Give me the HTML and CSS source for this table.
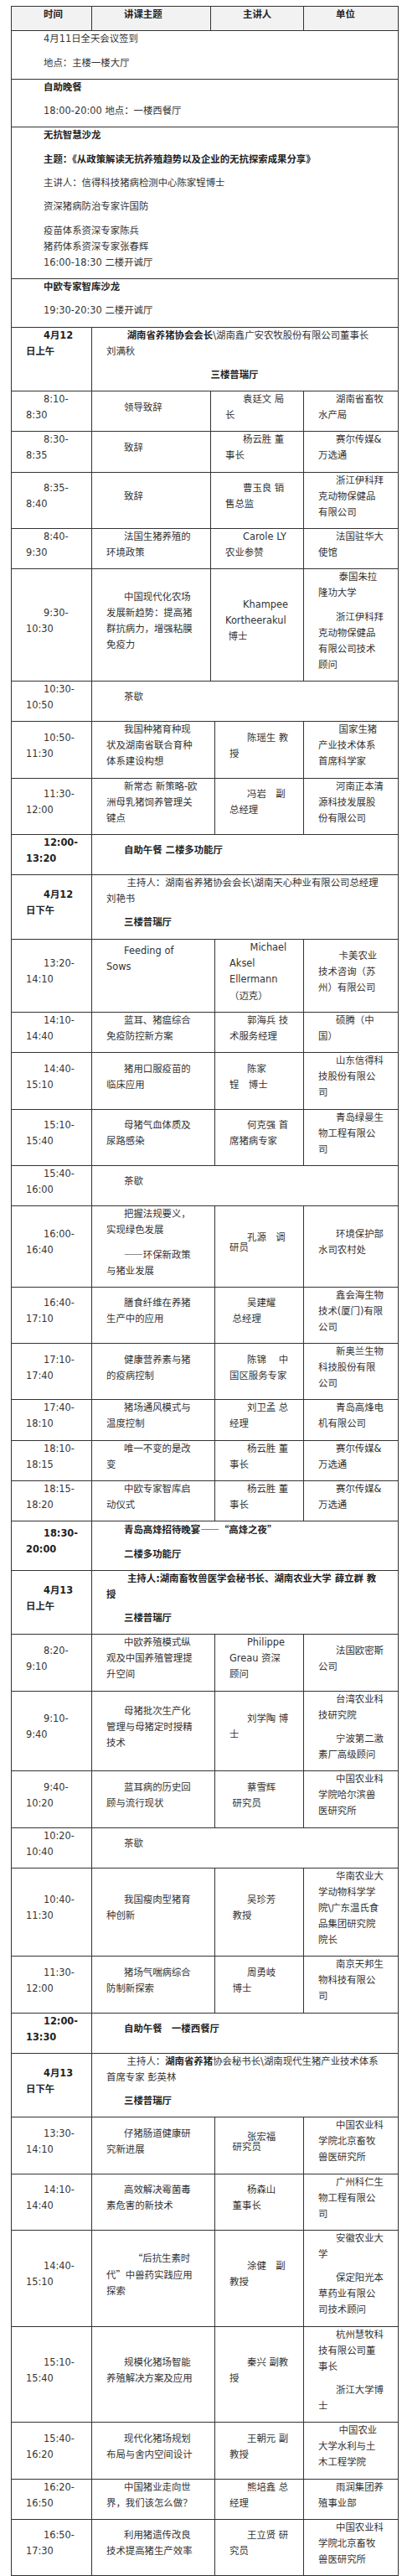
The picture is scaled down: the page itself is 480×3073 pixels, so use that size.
FILE: index.html
```html
<!DOCTYPE html>
<html lang="zh-CN">
<head>
<meta charset="utf-8">
<title>会议日程</title>
<link rel="stylesheet" href="styles.css">
</head>
<body>
<table class="agenda">
<colgroup>
<col class="col-time"><col class="col-topic"><col class="col-join"><col class="col-speaker"><col class="col-org">
</colgroup>
<thead>
<tr class="head">
<th><p>时间</p></th>
<th><p>讲课主题</p></th>
<th colspan="2"><p>主讲人</p></th>
<th><p>单位</p></th>
</tr>
</thead>
<tbody>
<tr><td colspan="5"><p>4月11日全天会议签到</p><p>地点：主楼一楼大厅</p></td></tr>
<tr><td colspan="5"><p class="b">自助晚餐</p><p>18:00-20:00 地点：一楼西餐厅</p></td></tr>
<tr><td colspan="5"><p class="b">无抗智慧沙龙</p><p class="b">主题：《从政策解读无抗养殖趋势以及企业的无抗探索成果分享》</p><p>主讲人：信得科技猪病检测中心陈家锃博士</p><p>资深猪病防治专家许国防</p><p class="keep">疫苗体系资深专家陈兵</p><p class="keep">猪药体系资深专家张春辉</p><p>16:00-18:30 二楼开诚厅</p></td></tr>
<tr><td colspan="5"><p class="b">中欧专家智库沙龙</p><p>19:30-20:30 二楼开诚厅</p></td></tr>

<tr><td class="top"><p class="b">4月12<br>日上午</p></td><td colspan="4"><p>&nbsp;<b>湖南省养猪协会会长</b>\湖南鑫广安农牧股份有限公司董事长<br>刘满秋</p><p class="b venue-mid">三楼普瑞厅</p></td></tr>
<tr><td><p>8:10-<br>8:30</p></td><td><p>领导致辞</p></td><td colspan="2"><p>袁廷文 局<br>长</p></td><td><p>湖南省畜牧<br>水产局</p></td></tr>
<tr><td><p>8:30-<br>8:35</p></td><td><p>致辞</p></td><td colspan="2"><p>杨云胜 董<br>事长</p></td><td><p>赛尔传媒&amp;<br>万选通</p></td></tr>
<tr><td><p>8:35-<br>8:40</p></td><td><p>致辞</p></td><td colspan="2"><p>曹玉良 销<br>售总监</p></td><td><p>浙江伊科拜<br>克动物保健品<br>有限公司</p></td></tr>
<tr><td><p>8:40-<br>9:30</p></td><td><p>法国生猪养殖的<br>环境政策</p></td><td colspan="2"><p>Carole LY<br>农业参赞</p></td><td><p>法国驻华大<br>使馆</p></td></tr>
<tr><td><p>9:30-<br>10:30</p></td><td><p>中国现代化农场<br>发展新趋势：提高猪<br>群抗病力，增强粘膜<br>免疫力</p></td><td colspan="2"><p>Khampee<br>Kortheerakul<br>&nbsp;博士</p></td><td><p>&nbsp;泰国朱拉<br>隆功大学</p><p>浙江伊科拜<br>克动物保健品<br>有限公司技术<br>顾问</p></td></tr>
<tr><td><p>10:30-<br>10:50</p></td><td colspan="4"><p>茶歇</p></td></tr>
<tr><td><p>10:50-<br>11:30</p></td><td colspan="2"><p>我国种猪育种现<br>状及湖南省联合育种<br>体系建设构想</p></td><td><p>陈瑶生 教<br>授</p></td><td><p>&nbsp;国家生猪<br>产业技术体系<br>首席科学家</p></td></tr>
<tr><td><p>11:30-<br>12:00</p></td><td colspan="2"><p>新常态 新策略-欧<br>洲母乳猪饲养管理关<br>键点</p></td><td><p>冯岩　副<br>总经理</p></td><td><p>河南正本清<br>源科技发展股<br>份有限公司</p></td></tr>
<tr><td><p class="b">12:00-<br>13:20</p></td><td colspan="4"><p class="b">自助午餐 二楼多功能厅</p></td></tr>

<tr><td><p class="b">4月12<br>日下午</p></td><td colspan="4"><p>&nbsp;主持人：湖南省养猪协会会长\湖南天心种业有限公司总经理<br>刘艳书</p><p class="b">三楼普瑞厅</p></td></tr>
<tr><td><p>13:20-<br>14:10</p></td><td colspan="2" class="feed"><p>Feeding of<br>Sows</p></td><td><p>&nbsp;Michael<br>Aksel<br>Ellermann<br><span class="cjk">（迈克）</span></p></td><td><p>&nbsp;卡美农业<br>技术咨询（苏<br>州）有限公司</p></td></tr>
<tr><td><p>14:10-<br>14:40</p></td><td colspan="2"><p>蓝耳、猪瘟综合<br>免疫防控新方案</p></td><td><p>郭海兵 技<br>术服务经理</p></td><td><p>硕腾（中<br>国）</p></td></tr>
<tr><td><p>14:40-<br>15:10</p></td><td colspan="2"><p>猪用口服疫苗的<br>临床应用</p></td><td><p>陈家<br>锃　博士</p></td><td><p>山东信得科<br>技股份有限公<br>司</p></td></tr>
<tr><td><p>15:10-<br>15:40</p></td><td colspan="2"><p>母猪气血体质及<br>尿路感染</p></td><td><p>何克强 首<br>席猪病专家</p></td><td><p>青岛绿曼生<br>物工程有限公<br>司</p></td></tr>
<tr><td><p>15:40-<br>16:00</p></td><td colspan="4"><p>茶歇</p></td></tr>
<tr><td><p>16:00-<br>16:40</p></td><td colspan="2"><p>把握法规要义，<br>实现绿色发展</p><p><span class="cjk">——</span>环保新政策<br>与猪业发展</p></td><td class="squeeze"><p>孔源　调<br>研员</p></td><td><p>环境保护部<br>水司农村处</p></td></tr>
<tr><td><p>16:40-<br>17:10</p></td><td colspan="2"><p>膳食纤维在养猪<br>生产中的应用</p></td><td><p>吴建耀<br>&nbsp;总经理</p></td><td><p>鑫会海生物<br>技术(厦门)有限<br>公司</p></td></tr>
<tr><td><p>17:10-<br>17:40</p></td><td colspan="2"><p>健康营养素与猪<br>的疫病控制</p></td><td><p>陈锦　 中<br>国区服务专家</p></td><td><p>新奥兰生物<br>科技股份有限<br>公司</p></td></tr>
<tr><td><p>17:40-<br>18:10</p></td><td colspan="2"><p>猪场通风模式与<br>温度控制</p></td><td><p>刘卫孟 总<br>经理</p></td><td><p>青岛高烽电<br>机有限公司</p></td></tr>
<tr><td><p>18:10-<br>18:15</p></td><td colspan="2"><p>唯一不变的是改<br>变</p></td><td><p>杨云胜 董<br>事长</p></td><td><p>赛尔传媒&amp;<br>万选通</p></td></tr>
<tr><td><p>18:15-<br>18:20</p></td><td colspan="2"><p>中欧专家智库启<br>动仪式</p></td><td><p>杨云胜 董<br>事长</p></td><td><p>赛尔传媒&amp;<br>万选通</p></td></tr>
<tr><td><p class="b">18:30-<br>20:00</p></td><td colspan="4"><p class="b">青岛高烽招待晚宴<span class="cjk">——“</span>高烽之夜<span class="cjk">”</span></p><p class="b">二楼多功能厅</p></td></tr>

<tr><td><p class="b">4月13<br>日上午</p></td><td colspan="4"><p class="b">&nbsp;主持人:湖南畜牧兽医学会秘书长、湖南农业大学 薛立群 教<br>授</p><p class="b">三楼普瑞厅</p></td></tr>
<tr><td><p>8:20-<br>9:10</p></td><td colspan="2"><p>中欧养殖模式纵<br>观及中国养殖管理提<br>升空间</p></td><td><p>Philippe<br>Greau 资深<br>顾问</p></td><td><p>法国欧密斯<br>公司</p></td></tr>
<tr><td><p>9:10-<br>9:40</p></td><td colspan="2"><p>母猪批次生产化<br>管理与母猪定时授精<br>技术</p></td><td><p>刘学陶 博<br>士</p></td><td><p>台湾农业科<br>技研究院</p><p>宁波第二激<br>素厂高级顾问</p></td></tr>
<tr><td><p>9:40-<br>10:20</p></td><td colspan="2"><p>蓝耳病的历史回<br>顾与流行现状</p></td><td><p>蔡雪辉<br>&nbsp;研究员</p></td><td><p>中国农业科<br>学院哈尔滨兽<br>医研究所</p></td></tr>
<tr><td><p>10:20-<br>10:40</p></td><td colspan="4"><p>茶歇</p></td></tr>
<tr><td><p>10:40-<br>11:30</p></td><td colspan="2"><p>我国瘦肉型猪育<br>种创新</p></td><td><p>吴珍芳<br>&nbsp;教授</p></td><td><p>华南农业大<br>学动物科学学<br>院\广东温氏食<br>品集团研究院<br>院长</p></td></tr>
<tr><td><p>11:30-<br>12:00</p></td><td colspan="2"><p>猪场气喘病综合<br>防制新探索</p></td><td><p>周勇岐<br>&nbsp;博士</p></td><td><p>南京天邦生<br>物科技有限公<br>司</p></td></tr>
<tr><td><p class="b">12:00-<br>13:30</p></td><td colspan="4"><p class="b">自助午餐　一楼西餐厅</p></td></tr>

<tr><td><p class="b">4月13<br>日下午</p></td><td colspan="4"><p>&nbsp;主持人：<b>湖南省养猪</b>协会秘书长\湖南现代生猪产业技术体系<br>首席专家 彭英林</p><p class="b">三楼普瑞厅</p></td></tr>
<tr><td><p>13:30-<br>14:10</p></td><td colspan="2"><p>仔猪肠道健康研<br>究新进展</p></td><td class="squeeze"><p>张宏福<br>&nbsp;研究员</p></td><td><p>中国农业科<br>学院北京畜牧<br>兽医研究所</p></td></tr>
<tr><td><p>14:10-<br>14:40</p></td><td colspan="2"><p>高效解决霉菌毒<br>素危害的新技术</p></td><td><p>杨森山<br>&nbsp;董事长</p></td><td><p>广州科仁生<br>物工程有限公<br>司</p></td></tr>
<tr><td><p>14:40-<br>15:10</p></td><td colspan="2"><p>&nbsp;&nbsp;&nbsp;<span class="cjk">“</span>后抗生素时<br>代<span class="cjk">”</span>中兽药实践应用<br>探索</p></td><td><p>涂健　副<br>教授</p></td><td><p>安徽农业大<br>学</p><p>保定阳光本<br>草药业有限公<br>司技术顾问</p></td></tr>
<tr><td><p>15:10-<br>15:40</p></td><td colspan="2"><p>规模化猪场智能<br>养殖解决方案及应用</p></td><td><p>秦兴 副教<br>授</p></td><td><p>杭州慧牧科<br>技有限公司董<br>事长</p><p>浙江大学博<br>士</p></td></tr>
<tr><td><p>15:40-<br>16:20</p></td><td colspan="2"><p>现代化猪场规划<br>布局与舍内空间设计</p></td><td><p>王朝元 副<br>教授</p></td><td><p>&nbsp;中国农业<br>大学水利与土<br>木工程学院</p></td></tr>
<tr><td><p>16:20-<br>16:50</p></td><td colspan="2"><p>中国猪业走向世<br>界，我们该怎么做？</p></td><td><p>熊培鑫 总<br>经理</p></td><td><p>雨润集团养<br>殖事业部</p></td></tr>
<tr><td><p>16:50-<br>17:30</p></td><td colspan="2"><p>利用猪遗传改良<br>技术提高猪生产效率</p></td><td><p>王立贤 研<br>究员</p></td><td><p>中国农业科<br>学院北京畜牧<br>兽医研究所</p></td></tr>
</tbody>
</table>
</body>
</html>
```

FILE: styles.css
```css
html, body {
  margin: 0;
  padding: 0;
  background: #ffffff;
}

body {
  font-family: "DejaVu Sans", "Noto Sans CJK SC", sans-serif;
  font-size: 11.4px;
  color: #333333;
}

.agenda {
  border-collapse: collapse;
  table-layout: fixed;
  width: 462px;
  margin: 7px 0 0 13px;
}

.col-time { width: 96px; }
.col-topic { width: 142px; }
.col-join { width: 5px; }
.col-speaker { width: 106px; }
.col-org { width: 113px; }

.agenda th,
.agenda td {
  border: 1px solid #333333;
  padding: 0 6px 0 17px;
  vertical-align: middle;
  text-align: left;
  font-weight: normal;
}

.agenda p {
  margin: 0 0 9.3px;
  text-indent: 21px;
  line-height: 19px;
  white-space: nowrap;
}

.agenda p.keep {
  margin-bottom: 0;
}

.head th {
  background: #f2f2f2;
  font-weight: bold;
  color: #222222;
}

.b,
.agenda b {
  font-weight: bold;
  color: #222222;
}

.cjk {
  font-family: "Noto Sans CJK SC", sans-serif;
}

.agenda td.top {
  vertical-align: top;
}

.agenda td.feed {
  vertical-align: top;
  padding-top: 4.5px;
}

.squeeze p {
  line-height: 12px;
}

.agenda p.venue-mid {
  text-indent: 124.5px;
}
```
